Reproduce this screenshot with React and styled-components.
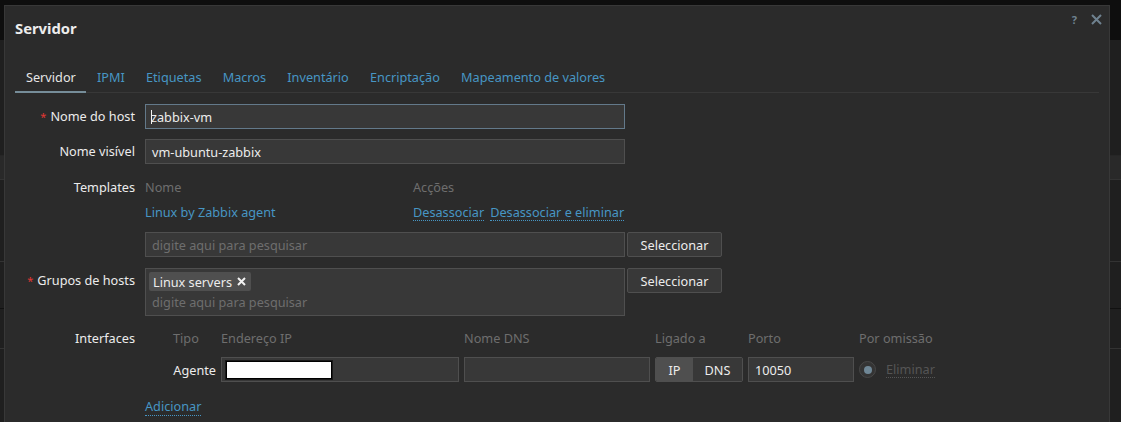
import React from 'react'
import styled, { createGlobalStyle } from 'styled-components'

const GlobalStyle = createGlobalStyle`
  html, body {
    margin: 0;
    padding: 0;
  }
  body {
    background: #1f1f1f;
    font-family: "Noto Sans", "Open Sans", Arial, sans-serif;
    font-size: 12.7px;
    color: #f2f2f2;
    overflow: hidden;
  }
  * { box-sizing: border-box; }
`;

const LINK = '#4796c4';
const MUTED = '#6e6e6e';
const FIELD_BG = '#383838';
const FIELD_BORDER = '#4f4f4f';

// page behind the dialog
const Page = styled.div`
  position: relative;
  width: 1121px;
  height: 422px;
  overflow: hidden;
  background: #1f1f1f;
`;

const TopBar = styled.div`
  height: 40px;
  background: #0e0e0e;
`;

const BgRow = styled.div`
  height: ${p => p.h}px;
  background: ${p => p.bg || 'transparent'};
  border-bottom: 1px solid ${p => p.line || '#2f2f2f'};
`;

// dialog
const Dialog = styled.div`
  position: absolute;
  left: 4px;
  top: 5px;
  width: 1106px;
  height: 440px;
  background: #2b2b2b;
  border: 1px solid #383838;
  padding: 0 10px;
`;

const Header = styled.div`
  display: flex;
  justify-content: space-between;
  align-items: flex-start;
  height: 44px;
`;

const Title = styled.h4`
  margin: 12px 0 0;
  font-size: 14.8px;
  line-height: 20px;
  font-weight: 700;
  color: #ededed;
`;

const HeaderTools = styled.div`
  display: flex;
  align-items: center;
  gap: 14px;
  margin: 7px -3px 0 0;
  color: #6f8290;
`;

const HelpMark = styled.span`
  font-size: 11px;
  font-weight: 700;
  line-height: 13px;
`;

const TabList = styled.div`
  display: flex;
  margin-top: 12px;
  border-bottom: 1px solid #383838;
`;

const Tab = styled.div`
  padding: 7px 10.6px 6px;
  line-height: 16px;
  margin-bottom: -1px;
  color: ${p => (p.$active ? '#e6e6e6' : LINK)};
  border-bottom: 2px solid ${p => (p.$active ? '#768d99' : 'transparent')};

  &:first-child {
    padding-left: 11px;
  }
`;

const Form = styled.div`
  padding-top: 11px;
`;

const FormRow = styled.div`
  display: flex;
  align-items: flex-start;
  gap: 10px;
  margin-top: ${p => p.$mt || 0}px;
`;

const Label = styled.div`
  width: 120px;
  flex: none;
  text-align: right;
  line-height: ${p => p.$lh || 25}px;
  color: #ececec;
  white-space: nowrap;
`;

const Asterisk = styled.span`
  color: #e33734;
  font-size: 11px;
  margin-right: 4px;
`;

const Field = styled.div`
  display: flex;
  flex-direction: column;
`;

const FieldLine = styled.div`
  display: flex;
  align-items: flex-start;
  gap: 2px;
  margin-top: ${p => p.$mt || 0}px;
`;

const TextBox = styled.div`
  position: relative;
  display: flex;
  align-items: center;
  width: ${p => p.$w || 480}px;
  height: ${p => p.$h || 25}px;
  padding: 0 6px;
  background: ${FIELD_BG};
  border: 1px solid ${p => (p.$focus ? '#63798a' : FIELD_BORDER)};
  color: ${p => (p.$placeholder ? MUTED : '#ececec')};
  white-space: nowrap;
`;

const Caret = styled.span`
  display: inline-block;
  width: 1px;
  height: 14px;
  background: #f2f2f2;
  margin: 0 -1px 0 -1px;
`;

const Redact = styled.span`
  width: 106px;
  height: 18px;
  margin-left: -2px;
  background: #fff;
  border: 1px solid #000;
  box-shadow: 0 0 0 1px #1a1a1a;
`;

const Button = styled.div`
  width: 95px;
  height: ${p => p.$h || 25}px;
  display: flex;
  align-items: center;
  justify-content: center;
  background: ${FIELD_BG};
  border: 1px solid ${FIELD_BORDER};
  border-radius: 2px;
  color: #ececec;
`;

const TemplateTable = styled.div`
  display: grid;
  grid-template-columns: 268px 212px;
`;

const HeadCell = styled.div`
  color: ${MUTED};
  line-height: ${p => p.$lh || 24}px;
  white-space: nowrap;
`;

const LinkCell = styled.div`
  display: flex;
  align-items: center;
  gap: 6px;
  height: 26px;
  white-space: nowrap;
`;

const Link = styled.span`
  color: ${p => (p.$disabled ? '#555' : LINK)};
  line-height: 16px;
  border-bottom: ${p => (p.$plain ? '1px solid transparent' : `1px dotted ${p.$disabled ? '#555' : LINK}`)};
`;

const MultiSelect = styled.div`
  width: 480px;
  height: 48px;
  padding: 3px;
  background: ${FIELD_BG};
  border: 1px solid ${FIELD_BORDER};
`;

const Chip = styled.span`
  display: inline-flex;
  align-items: center;
  gap: 5px;
  height: 19px;
  padding: 0 5px 0 4px;
  background: #4f4f4f;
  border-radius: 2px;
  color: #ececec;
`;

const Placeholder = styled.div`
  color: ${MUTED};
  padding-left: 3px;
  line-height: 20px;
  margin-top: 1px;
`;

const InterfaceGrid = styled.div`
  display: grid;
  grid-template-columns: 23px 43px 238px 186px 88px 106px auto;
  column-gap: 5px;
  row-gap: 8px;
  align-items: center;
`;

const TypeCell = styled.div`
  text-align: ${p => (p.$right ? 'right' : 'left')};
  line-height: 22px;
  white-space: nowrap;
  color: ${p => (p.$right ? '#ececec' : MUTED)};
`;

const Toggle = styled.div`
  display: flex;
  height: 25px;
  border: 1px solid ${FIELD_BORDER};
  border-radius: 2px;
  overflow: hidden;
`;

const ToggleOpt = styled.span`
  width: ${p => p.$w}px;
  display: flex;
  align-items: center;
  justify-content: center;
  background: ${p => (p.$on ? '#4f4f4f' : FIELD_BG)};
  color: #ececec;
`;

const DefaultCell = styled.div`
  display: flex;
  align-items: center;
  gap: 10px;
`;

const Radio = styled.span`
  width: 17px;
  height: 17px;
  border-radius: 50%;
  border: 1px solid #484848;
  background: #343434;
  display: flex;
  align-items: center;
  justify-content: center;

  &::after {
    content: '';
    width: 8px;
    height: 8px;
    border-radius: 50%;
    background: #6f8796;
  }
`;

const AddRow = styled.div`
  line-height: 24px;
`;

const CloseIcon = () => (
  <svg width="11" height="11" viewBox="0 0 11 11">
    <path d="M1 1 L10 10 M10 1 L1 10" stroke="currentColor" strokeWidth="2" />
  </svg>
);

const ChipX = () => (
  <svg width="9" height="9" viewBox="0 0 9 9">
    <path d="M1 1 L8 8 M8 1 L1 8" stroke="#f2f2f2" strokeWidth="2" />
  </svg>
);

const tabs = ['Servidor', 'IPMI', 'Etiquetas', 'Macros', 'Inventário', 'Encriptação', 'Mapeamento de valores'];

export default function App() {
  return (
    <Page>
      <GlobalStyle />
      <TopBar />
      <BgRow h={116} line="#262626" />
      <BgRow h={24} bg="#292929" line="#333" />
      <BgRow h={82} line="#333" />
      <BgRow h={47} line="#111" />
      <BgRow h={40} line="#333" />

      <Dialog>
        <Header>
          <Title>Servidor</Title>
          <HeaderTools>
            <HelpMark>?</HelpMark>
            <CloseIcon />
          </HeaderTools>
        </Header>

        <TabList>
          {tabs.map((t, i) => (
            <Tab key={t} $active={i === 0}>{t}</Tab>
          ))}
        </TabList>

        <Form>
          <FormRow>
            <Label><Asterisk>*</Asterisk>Nome do host</Label>
            <TextBox $focus><Caret />zabbix-vm</TextBox>
          </FormRow>

          <FormRow $mt={10}>
            <Label>Nome visível</Label>
            <TextBox>vm-ubuntu-zabbix</TextBox>
          </FormRow>

          <FormRow $mt={11}>
            <Label $lh={24}>Templates</Label>
            <Field>
              <TemplateTable>
                <HeadCell>Nome</HeadCell>
                <HeadCell>Acções</HeadCell>
                <LinkCell><Link $plain>Linux by Zabbix agent</Link></LinkCell>
                <LinkCell>
                  <Link>Desassociar</Link>
                  <Link>Desassociar e eliminar</Link>
                </LinkCell>
              </TemplateTable>
              <FieldLine $mt={7}>
                <TextBox $placeholder>digite aqui para pesquisar</TextBox>
                <Button>Seleccionar</Button>
              </FieldLine>
            </Field>
          </FormRow>

          <FormRow $mt={11}>
            <Label><Asterisk>*</Asterisk>Grupos de hosts</Label>
            <FieldLine>
              <MultiSelect>
                <Chip>Linux servers <ChipX /></Chip>
                <Placeholder>digite aqui para pesquisar</Placeholder>
              </MultiSelect>
              <Button>Seleccionar</Button>
            </FieldLine>
          </FormRow>

          <FormRow $mt={11}>
            <Label $lh={22}>Interfaces</Label>
            <InterfaceGrid>
              <span />
              <TypeCell>Tipo</TypeCell>
              <HeadCell $lh={22}>Endereço IP</HeadCell>
              <HeadCell $lh={22}>Nome DNS</HeadCell>
              <HeadCell $lh={22}>Ligado a</HeadCell>
              <HeadCell $lh={22}>Porto</HeadCell>
              <HeadCell $lh={22}>Por omissão</HeadCell>

              <span />
              <TypeCell $right>Agente</TypeCell>
              <TextBox $w={238}><Redact /></TextBox>
              <TextBox $w={186} />
              <Toggle>
                <ToggleOpt $w={37} $on>IP</ToggleOpt>
                <ToggleOpt $w={49}>DNS</ToggleOpt>
              </Toggle>
              <TextBox $w={106}>10050</TextBox>
              <DefaultCell>
                <Radio />
                <Link $disabled>Eliminar</Link>
              </DefaultCell>
            </InterfaceGrid>
          </FormRow>

          <FormRow $mt={12}>
            <Label />
            <AddRow><Link>Adicionar</Link></AddRow>
          </FormRow>
        </Form>
      </Dialog>
    </Page>
  )
}
